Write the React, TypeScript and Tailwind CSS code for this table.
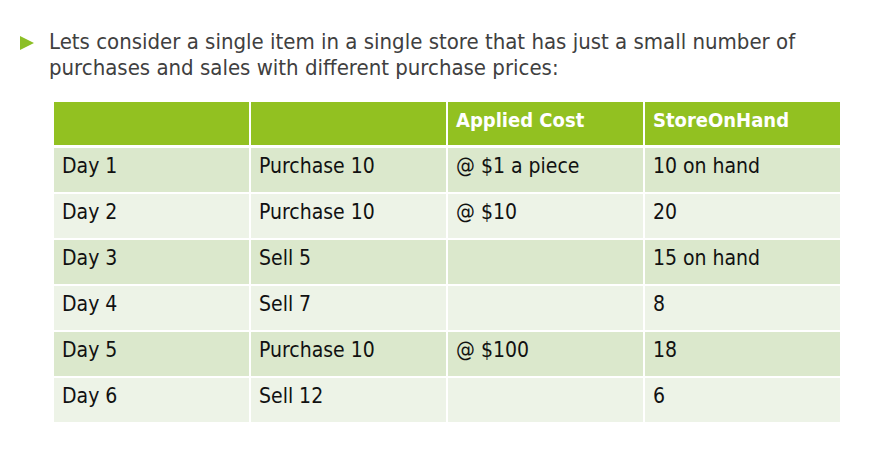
import React from "react";

const rows: [string, string, string, string][] = [
  ["Day 1", "Purchase 10", "@ $1 a piece", "10 on hand"],
  ["Day 2", "Purchase 10", "@ $10", "20"],
  ["Day 3", "Sell 5", "", "15 on hand"],
  ["Day 4", "Sell 7", "", "8"],
  ["Day 5", "Purchase 10", "@ $100", "18"],
  ["Day 6", "Sell 12", "", "6"],
];

export default function App() {
  return (
    <div
      className="w-[880px] h-[473px] bg-white overflow-hidden"
      style={{ fontFamily: '"DejaVu Sans Condensed", "DejaVu Sans", sans-serif' }}
    >
      <div className="flex pt-[29px] pl-[20px]">
        <svg width="14" height="14" viewBox="0 0 14 14" className="mt-[7px] shrink-0">
          <polygon points="0,0 14,7 0,14" fill="#8cbf26" />
        </svg>
        <p className="ml-[15px] text-[22px] leading-[26px] text-[#404040]">
          Lets consider a single item in a single store that has just a small number of
          <br />
          purchases and sales with different purchase prices:
        </p>
      </div>
      <div className="ml-[54px] mt-[21px] w-[786px] grid grid-cols-4 gap-x-[2px]">
        <div className="h-[43px] bg-[#92c121]" />
        <div className="h-[43px] bg-[#92c121]" />
        <div className="h-[43px] bg-[#92c121] pl-[8px] pt-[3px] text-[20px] font-bold text-white">
          Applied Cost
        </div>
        <div className="h-[43px] bg-[#92c121] pl-[8px] pt-[3px] text-[20px] font-bold text-white">
          StoreOnHand
        </div>
      </div>
      <div className="ml-[54px] mt-[3px] w-[786px] grid grid-cols-4 gap-[2px]">
        {rows.map((r, i) =>
          r.map((c, j) => (
            <div
              key={`${i}-${j}`}
              className={`h-[44px] pl-[8px] pt-[3px] text-[21px] text-[#111111] ${
                i % 2 === 0 ? "bg-[#dbe8cc]" : "bg-[#edf3e7]"
              }`}
            >
              {c}
            </div>
          ))
        )}
      </div>
    </div>
  );
}
